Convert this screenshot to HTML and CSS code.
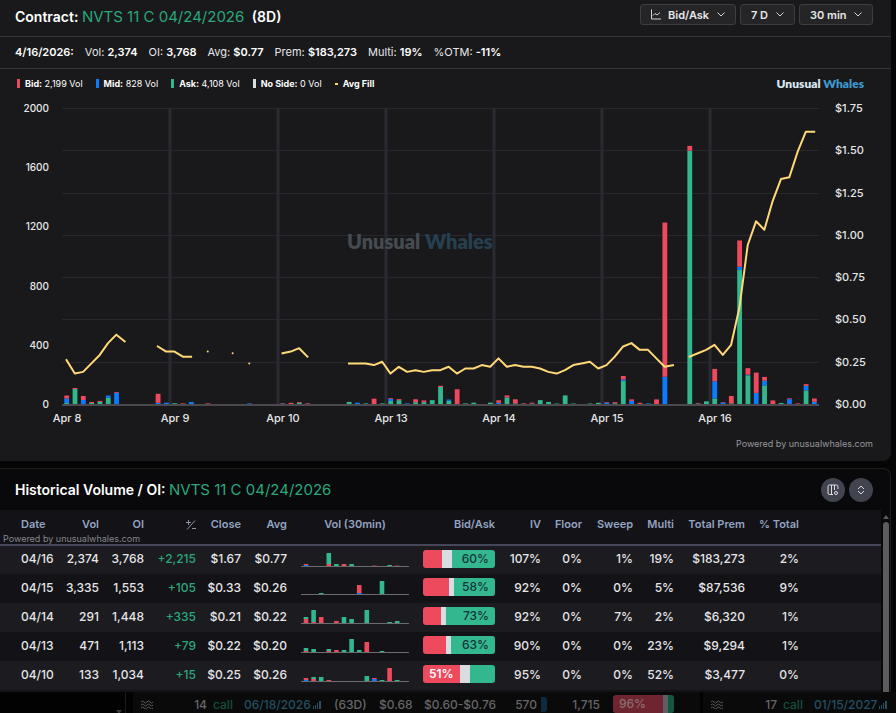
FILE: index.html
```html
<!DOCTYPE html>
<html lang="en">
<head>
  <meta charset="UTF-8">
  <meta name="viewport" content="width=device-width, initial-scale=1.0">
  <title>NVTS 11 C 04/24/2026</title>
  <link rel="stylesheet" href="styles.css">
</head>
<body>
  <section class="panel contract">
    <header class="contract-header">
      <h1>Contract: <span class="symbol">NVTS 11 C 04/24/2026</span> <span class="days">(8D)</span></h1>
      <div class="controls">
        <label class="dropdown">
          <svg class="chart-icon" width="10" height="11" viewBox="0 0 10 11"><path d="M0.500 0.500V10H10M2 6.500L4 4.500L6 6L9 3.500"/></svg>
          <select aria-label="Series"><option>Bid/Ask</option></select>
          <svg class="chevron" width="8" height="5" viewBox="0 0 8 5"><path d="M0.5 0.5L4 4L7.5 0.5"/></svg>
        </label>
        <label class="dropdown">
          <select aria-label="Range"><option>7 D</option></select>
          <svg class="chevron" width="8" height="5" viewBox="0 0 8 5"><path d="M0.5 0.5L4 4L7.5 0.5"/></svg>
        </label>
        <label class="dropdown">
          <select aria-label="Interval"><option>30 min</option></select>
          <svg class="chevron" width="8" height="5" viewBox="0 0 8 5"><path d="M0.5 0.5L4 4L7.5 0.5"/></svg>
        </label>
      </div>
    </header>

    <div class="summary">
      <b>4/16/2026:</b>
      <span>Vol: <b>2,374</b></span>
      <span>OI: <b>3,768</b></span>
      <span>Avg: <b>$0.77</b></span>
      <span>Prem: <b>$183,273</b></span>
      <span>Multi: <b>19%</b></span>
      <span>%OTM: <b>-11%</b></span>
    </div>

    <div class="legend-row">
      <ul class="legend">
        <li class="bid-key"><b>Bid:</b> 2,199 Vol</li>
        <li class="mid-key"><b>Mid:</b> 828 Vol</li>
        <li class="ask-key"><b>Ask:</b> 4,108 Vol</li>
        <li class="none-key"><b>No Side:</b> 0 Vol</li>
        <li class="avg-key"><b>Avg Fill</b></li>
      </ul>
      <div class="logo">Unusual <span>Whales</span></div>
    </div>

    <svg id="chart" class="chart" viewBox="0 0 891 334"></svg>
    <p class="powered">Powered by unusualwhales.com</p>
  </section>

  <section class="panel history">
    <header class="history-header">
      <h2>Historical Volume / OI: <span class="symbol">NVTS 11 C 04/24/2026</span></h2>
      <div class="round-buttons">
        <button type="button" aria-label="Columns">
          <svg width="12" height="12" viewBox="0 0 12 12"><path d="M6 10.500H2.500a1.500 1.500 0 0 1-1.500-1.500V2.500a1.500 1.500 0 0 1 1.500-1.500H9.500a1.500 1.500 0 0 1 1.500 1.500V5M4.500 1V10.500M7.500 1V6"/><circle cx="9" cy="9" r="1.500"/></svg>
        </button>
        <button type="button" aria-label="Expand">
          <svg width="10" height="10" viewBox="0 0 10 10"><path d="M2 4L5 1L8 4M2 6L5 9L8 6"/></svg>
        </button>
      </div>
    </header>

    <div class="history-body">
      <div class="table-wrap">
        <table>
          <colgroup>
            <col class="c-date"><col class="c-vol"><col class="c-oi"><col class="c-diff"><col class="c-close"><col class="c-avg">
            <col class="c-spark"><col class="c-side"><col class="c-iv"><col class="c-floor"><col class="c-sweep"><col class="c-multi">
            <col class="c-prem"><col class="c-total"><col>
          </colgroup>
          <thead>
            <tr>
              <th>Date</th><th>Vol</th><th>OI</th>
              <th><svg class="plus-minus" width="10" height="10" viewBox="0 0 10 10"><path d="M0 2.500H5M2.500 0V5M1 9.500L9 0.500M6 8.500H10"/></svg></th>
              <th>Close</th><th>Avg</th><th class="vol30">Vol (30min)</th><th>Bid/Ask</th><th>IV</th><th>Floor</th>
              <th>Sweep</th><th>Multi</th><th>Total Prem</th><th>% Total</th><th></th>
            </tr>
          </thead>
          <tbody>
            <tr>
              <td>04/16</td><td>2,374</td><td>3,768</td><td class="up">+2,215</td><td>$1.67</td><td>$0.77</td>
              <td><svg class="spark" data-day="04/16" viewBox="0 0 108 18"></svg></td>
              <td><div class="side-bar" data-split="26,14,60">60%</div></td>
              <td>107%</td><td>0%</td><td>1%</td><td>19%</td><td>$183,273</td><td>2%</td><td></td>
            </tr>
            <tr>
              <td>04/15</td><td>3,335</td><td>1,553</td><td class="up">+105</td><td>$0.33</td><td>$0.26</td>
              <td><svg class="spark" data-day="04/15" viewBox="0 0 108 18"></svg></td>
              <td><div class="side-bar" data-split="36,7,57">58%</div></td>
              <td>92%</td><td>0%</td><td>0%</td><td>5%</td><td>$87,536</td><td>9%</td><td></td>
            </tr>
            <tr>
              <td>04/14</td><td>291</td><td>1,448</td><td class="up">+335</td><td>$0.21</td><td>$0.22</td>
              <td><svg class="spark" data-day="04/14" viewBox="0 0 108 18"></svg></td>
              <td><div class="side-bar" data-split="25,7,68">73%</div></td>
              <td>92%</td><td>0%</td><td>7%</td><td>2%</td><td>$6,320</td><td>1%</td><td></td>
            </tr>
            <tr>
              <td>04/13</td><td>471</td><td>1,113</td><td class="up">+79</td><td>$0.22</td><td>$0.20</td>
              <td><svg class="spark" data-day="04/13" viewBox="0 0 108 18"></svg></td>
              <td><div class="side-bar" data-split="32,7,61">63%</div></td>
              <td>90%</td><td>0%</td><td>0%</td><td>23%</td><td>$9,294</td><td>1%</td><td></td>
            </tr>
            <tr>
              <td>04/10</td><td>133</td><td>1,034</td><td class="up">+15</td><td>$0.25</td><td>$0.26</td>
              <td><svg class="spark" data-day="04/10" viewBox="0 0 108 18"></svg></td>
              <td><div class="side-bar bid-led" data-split="51,14,35">51%</div></td>
              <td>95%</td><td>0%</td><td>0%</td><td>52%</td><td>$3,477</td><td>0%</td><td></td>
            </tr>
          </tbody>
        </table>
        <span class="table-credit">Powered by unusualwhales.com</span>
      </div>
      <div class="scrollbar"><i class="arrow"></i><i class="thumb"></i></div>
    </div>
  </section>

  <section class="flow">
    <div class="flow-side"><i class="arrow-down"></i></div>
    <div class="flow-row">
      <svg class="waves" width="12" height="9" viewBox="0 0 12 9"><path d="M0 2q1.500-2 3 0t3 0t3 0t3 0M0 5q1.500-2 3 0t3 0t3 0t3 0M0 8q1.500-2 3 0t3 0t3 0t3 0"/></svg>
      <span class="strike">14</span>
      <span class="call">call</span>
      <span class="expiry">06/18/2026<svg width="8" height="8" viewBox="0 0 8 8"><path d="M0 5h1v3H0zM2 4h1v4H2zM4 2h1v6H4zM6 0h2v8H6z"/></svg></span>
      <span class="dte">(63D)</span>
      <span class="spot">$0.68</span>
      <span class="range">$0.60-$0.76</span>
      <span class="size">570</span>
      <span class="oi">1,715</span>
      <span class="flow-bar">96%</span>
    </div>
    <div class="flow-row">
      <svg class="waves" width="12" height="9" viewBox="0 0 12 9"><path d="M0 2q1.500-2 3 0t3 0t3 0t3 0M0 5q1.500-2 3 0t3 0t3 0t3 0M0 8q1.500-2 3 0t3 0t3 0t3 0"/></svg>
      <span class="strike">17</span>
      <span class="call">call</span>
      <span class="expiry">01/15/2027<svg width="8" height="8" viewBox="0 0 8 8"><path d="M0 5h1v3H0zM2 4h1v4H2zM4 2h1v6H4zM6 0h2v8H6z"/></svg></span>
    </div>
  </section>

  <script src="chart.js"></script>
</body>
</html>
```
FILE: chart.js
```js
const SVG_NS = 'http://www.w3.org/2000/svg';

function add(parent, name, attrs, text) {
  const el = document.createElementNS(SVG_NS, name);
  for (const key in attrs) el.setAttribute(key, attrs[key]);
  if (text) el.textContent = text;
  parent.appendChild(el);
  return el;
}

// [slot, ask, mid, bid], 13 half-hour slots per day
const volume = [
  [0, 7, 30, 20], [1, 101, 0, 7], [2, 0, 27, 27], [3, 7, 0, 7], [4, 14, 0, 7], [5, 42, 15, 0], [6, 0, 76, 5],
  [11, 0, 8, 61], [12, 0, 9, 0], [13, 5, 0, 0], [14, 0, 0, 4], [15, 0, 14, 0], [17, 0, 0, 4], [22, 0, 4, 0],
  [26, 0, 3, 3], [27, 0, 0, 8], [28, 8, 0, 5], [29, 0, 0, 4],
  [34, 14, 0, 0], [35, 0, 9, 0], [36, 4, 0, 0], [37, 0, 0, 36], [38, 4, 0, 0], [39, 20, 14, 5], [40, 26, 0, 7],
  [41, 0, 4, 0], [42, 12, 0, 20], [43, 12, 0, 12], [44, 26, 0, 0], [45, 115, 0, 8], [46, 22, 8, 0], [47, 0, 0, 100],
  [48, 4, 0, 0], [49, 9, 0, 0], [51, 9, 0, 0],
  [52, 0, 8, 17], [53, 44, 0, 14], [54, 4, 0, 28], [55, 0, 0, 4], [56, 3, 0, 6], [57, 26, 0, 0], [58, 14, 0, 0],
  [59, 3, 0, 0], [60, 58, 0, 0], [61, 3, 0, 0], [63, 3, 0, 0], [64, 8, 0, 0],
  [65, 0, 9, 4], [66, 5, 0, 7], [67, 155, 10, 24], [68, 0, 21, 10], [69, 0, 0, 8], [70, 0, 4, 0], [71, 0, 0, 31],
  [72, 0, 184, 1042], [75, 1712, 0, 32], [76, 0, 3, 4], [77, 18, 0, 0],
  [78, 38, 115, 84], [79, 0, 10, 3], [80, 4, 0, 50], [81, 905, 22, 178], [82, 194, 4, 44], [83, 0, 75, 137],
  [84, 126, 31, 26], [85, 0, 0, 24], [86, 7, 0, 0], [87, 0, 33, 5], [88, 0, 0, 4], [89, 92, 30, 12], [90, 0, 15, 22]
];

// average fill, grouped into unbroken runs that start at a slot
const fills = [
  [0, [.26, .18, .19, .24, .29, .36, .41, .37]],
  [11, [.34, .31, .31, .28, .28]],
  [17, [.31]],
  [20, [.30]],
  [22, [.24]],
  [26, [.30, .31, .33, .28]],
  [34, [.24, .24, .24, .23, .25, .18, .22, .19, .20, .19, .20, .20, .22, .18, .21, .21, .23, .22, .27, .22,
        .23, .22, .22, .21, .19, .18, .20, .23, .24, .25, .21, .23, .28, .34, .36, .32, .32, .27, .22, .23]],
  [75, [.28, .30, .32, .35, .29, .35, .57, .94, 1.08, 1.03, 1.20, 1.33, 1.34, 1.49, 1.61, 1.61]]
];

const days = ['Apr 8', 'Apr 9', 'Apr 10', 'Apr 13', 'Apr 14', 'Apr 15', 'Apr 16'];

const left = 62, right = 819, ceiling = 12, base = 308;
const dayWidth = 108;
const slotX = slot => 66.5 + slot * dayWidth / 13;
const volY = v => base - v * (base - ceiling) / 2000;
const priceY = p => base - p * (base - ceiling) / 1.75;

function drawChart() {
  const svg = document.getElementById('chart');

  for (let p = 0.25; p <= 1.75; p += 0.25) {
    const y = Math.round(priceY(p)) + .5;
    add(svg, 'line', { class: 'grid', x1: left, x2: right, y1: y, y2: y });
  }
  for (let d = 1; d < days.length; d++) {
    add(svg, 'rect', { class: 'day-line', x: left + d * dayWidth - 1.5, y: ceiling, width: 3, height: base - ceiling });
  }

  const mark = add(svg, 'text', { class: 'watermark', x: 347, y: 153 }, 'Unusual ');
  add(mark, 'tspan', { class: 'blue' }, 'Whales');

  volume.forEach(([slot, ask, mid, bid]) => {
    let total = 0;
    [['ask', ask], ['mid', mid], ['bid', bid]].forEach(([name, v]) => {
      if (!v) return;
      add(svg, 'rect', { class: name, x: slotX(slot) - 2.2, y: volY(total + v), width: 4.8, height: volY(total) - volY(total + v) });
      total += v;
    });
  });

  add(svg, 'rect', { class: 'axis', x: left, y: base, width: right - left, height: 2 });

  fills.forEach(([start, prices]) => {
    if (prices.length === 1) {
      add(svg, 'circle', { class: 'dot', cx: slotX(start), cy: priceY(prices[0]), r: 1 });
      return;
    }
    const points = prices.map((p, i) => slotX(start + i) + ',' + priceY(p)).join(' ');
    add(svg, 'polyline', { class: 'fill-line', points });
  });

  for (let v = 0; v <= 2000; v += 400) {
    add(svg, 'text', { class: 'label volume', x: 49, y: Math.round(volY(v)) + 4 }, String(v));
  }
  for (let p = 0; p <= 1.75; p += 0.25) {
    add(svg, 'text', { class: 'label', x: 835, y: Math.round(priceY(p)) + 4 }, '$' + p.toFixed(2));
  }
  days.forEach((day, d) => {
    add(svg, 'text', { class: 'label day', x: 67 + d * dayWidth, y: 326 }, day);
  });
}

// per day: [slot, side, height, side, height]
const sparks = {
  '04/16': [[0, 'mid', 1, 'bid', 1], [3, 'bid', 2, 'ask', 11], [4, 'ask', 2], [5, 'bid', 2], [6, 'ask', 2], [9, 'bid', .4], [11, 'ask', 1], [12, 'bid', .4]],
  '04/15': [[2, 'ask', 1], [7, 'mid', 1, 'bid', 8], [10, 'ask', 13]],
  '04/14': [[0, 'bid', 4, 'ask', 2], [1, 'bid', 1, 'ask', 12], [2, 'bid', 6], [4, 'bid', 2], [5, 'ask', 6], [6, 'ask', 4], [8, 'ask', 13], [11, 'ask', 1], [12, 'ask', 2]],
  '04/13': [[0, 'bid', 1, 'ask', 3], [1, 'ask', 3], [3, 'bid', 1, 'ask', 2], [4, 'bid', 2], [5, 'ask', 2], [6, 'ask', 13], [7, 'ask', 2], [8, 'bid', 10], [10, 'ask', 1]],
  '04/10': [[0, 'mid', 1, 'bid', 2], [1, 'bid', 2, 'ask', 2], [2, 'ask', 4], [3, 'bid', 1], [8, 'ask', 5], [9, 'mid', 2, 'bid', 1], [10, 'ask', 1], [11, 'bid', 13], [12, 'ask', 1]]
};

function drawSparks() {
  document.querySelectorAll('.spark').forEach(svg => {
    sparks[svg.dataset.day].forEach(([slot, ...parts]) => {
      let y = 16;
      for (let i = 0; i < parts.length; i += 2) {
        y -= parts[i + 1];
        add(svg, 'rect', { class: parts[i], x: 2.7 + slot * 7.6, y, width: 4.6, height: parts[i + 1] });
      }
    });
    add(svg, 'rect', { class: 'spark-axis', x: 0, y: 16, width: 108, height: 1 });
  });
}

function paintSideBars() {
  document.querySelectorAll('.side-bar').forEach(bar => {
    const [bid, mid] = bar.dataset.split.split(',').map(Number);
    bar.style.setProperty('--bid-end', bid + '%');
    bar.style.setProperty('--mid-end', bid + mid + '%');
  });
}

drawChart();
drawSparks();
paintSideBars();
```
FILE: styles.css
```css
:root {
  --bg: #050506;
  --panel: #19191b;
  --line: #333336;
  --text: #e6e6e8;
  --green: #2aa87c;
  --ask: #33b78f;
  --mid: #0a7cff;
  --bid: #ee4a5d;
  --none: #d8dde4;
  --fill: #ffd977;
}

* {
  box-sizing: border-box;
}

body {
  margin: 0;
  height: 100vh;
  overflow: hidden;
  background: var(--bg);
  color: var(--text);
  font-family: Inter, "Liberation Sans", sans-serif;
  font-size: 11px;
}

.panel {
  margin-right: 5px;
}

h1,
h2 {
  margin: 0;
  font-size: 14px;
  font-weight: 600;
  color: #fff;
}

.symbol {
  color: var(--green);
  font-size: 15px;
  font-weight: 400;
}

.days {
  margin-left: 4px;
}

/* contract panel */

.contract {
  height: 461px;
  background: var(--panel);
  border-bottom-right-radius: 8px;
}

.contract-header {
  display: flex;
  align-items: center;
  justify-content: space-between;
  height: 37px;
  padding: 0 18px 4px 15px;
  border-bottom: 1px solid var(--line);
}

.controls {
  display: flex;
  align-self: flex-start;
  gap: 4px;
  padding-top: 4px;
}

.dropdown {
  display: flex;
  align-items: center;
  gap: 7px;
  height: 21px;
  padding: 0 10px;
  background: #252527;
  border: 1px solid #3d3d40;
  border-radius: 3px;
}

.dropdown select {
  appearance: none;
  padding: 0;
  border: 0;
  background: none;
  color: var(--text);
  font: 600 11px Inter, "Liberation Sans", sans-serif;
}

.dropdown svg {
  fill: none;
  stroke: #d4d4d6;
}

.summary {
  display: flex;
  align-items: center;
  gap: 11px;
  height: 32px;
  padding: 0 0 1px 15px;
  border-bottom: 1px solid var(--line);
}

.summary b {
  color: #fff;
  font-weight: 600;
}

.legend-row {
  display: flex;
  align-items: center;
  justify-content: space-between;
  height: 27px;
  padding: 2px 27px 0 17px;
}

.legend {
  display: flex;
  gap: 13px;
  margin: 0;
  padding: 0;
  list-style: none;
  font-size: 9px;
  color: #fff;
}

.legend li::before {
  content: "";
  display: inline-block;
  width: 3px;
  height: 9px;
  margin-right: 5px;
  vertical-align: -1px;
}

.legend .bid-key::before { background: var(--bid); }
.legend .mid-key::before { background: var(--mid); }
.legend .ask-key::before { background: var(--ask); }
.legend .none-key::before { background: var(--none); }

.legend .avg-key::before {
  height: 2px;
  background: var(--fill);
  vertical-align: 2px;
}

.logo {
  font: 800 12px Lato, sans-serif;
  color: #dbe8f2;
}

.logo span {
  color: #3d9ad0;
}

.chart {
  display: block;
  width: 100%;
}

.chart .grid {
  stroke: #27272d;
}

.day-line {
  fill: #2a2a32;
}

.axis {
  fill: #4a4a4e;
}

.ask { fill: var(--ask); }
.mid { fill: var(--mid); }
.bid { fill: var(--bid); }

.fill-line {
  fill: none;
  stroke: var(--fill);
  stroke-width: 2;
  stroke-linejoin: round;
  stroke-linecap: square;
}

.dot {
  fill: var(--fill);
}

.label {
  fill: var(--text);
  font-size: 11px;
  font-weight: 500;
}

.label.volume {
  font-size: 10px;
  text-anchor: end;
}

.label.day {
  text-anchor: middle;
}

.watermark {
  fill: #454b52;
  font: 800 20px Lato, sans-serif;
}

.watermark .blue {
  fill: #26404f;
}

.powered {
  margin: 8px 18px 0 0;
  color: #97979b;
  font-size: 9px;
  line-height: 12px;
  text-align: right;
}

/* history panel */

.history {
  margin-top: 7px;
  background: #09090b;
  border-top: 1px solid #1e1e20;
  border-right: 1px solid #1e1e20;
  border-top-right-radius: 8px;
}

.history-header {
  display: flex;
  align-items: center;
  justify-content: space-between;
  height: 41px;
  padding: 0 17px 0 15px;
}

.round-buttons {
  display: flex;
  gap: 4px;
}

.round-buttons button {
  display: flex;
  align-items: center;
  justify-content: center;
  width: 24px;
  height: 24px;
  padding: 0;
  border: 0;
  border-radius: 50%;
  background: #41434f;
}

.round-buttons svg {
  fill: none;
  stroke: #dedee2;
}

.history-body {
  display: flex;
  height: 182px;
  overflow: hidden;
}

.table-wrap {
  position: relative;
  flex: 1;
  background: #131317;
}

table {
  width: 100%;
  table-layout: fixed;
  border-collapse: collapse;
  font-size: 12px;
}

.c-date { width: 60px; }
.c-vol { width: 39px; }
.c-oi { width: 45px; }
.c-diff { width: 52px; }
.c-close { width: 45px; }
.c-avg { width: 46px; }
.c-spark { width: 122px; }
.c-side { width: 86px; }
.c-iv { width: 46px; }
.c-floor { width: 41px; }
.c-sweep { width: 51px; }
.c-multi { width: 41px; }
.c-prem { width: 71px; }
.c-total { width: 54px; }

th,
td {
  padding: 0;
  text-align: right;
  white-space: nowrap;
}

th:first-child,
td:first-child {
  padding-left: 21px;
  text-align: left;
}

th {
  height: 35px;
  padding-bottom: 6px;
  border-bottom: 2px solid #454659;
  color: #93a2c0;
  font-size: 11px;
  font-weight: 600;
}

.vol30 {
  padding-left: 14px;
  text-align: center;
}

.plus-minus {
  fill: none;
  stroke: #8b93a5;
  vertical-align: middle;
}

td {
  height: 29px;
  padding-bottom: 3px;
  font-weight: 500;
}

tbody tr:nth-child(odd) {
  background: #1b1b20;
}

.up {
  color: var(--green);
}

.spark {
  display: inline-block;
  width: 108px;
  height: 18px;
  vertical-align: middle;
}

.spark-axis {
  fill: #6d6d70;
}

.side-bar {
  width: 72px;
  height: 18px;
  margin-left: auto;
  padding: 0 6px;
  border-radius: 3px;
  background: linear-gradient(90deg, var(--bid) var(--bid-end), var(--none) var(--bid-end) var(--mid-end), var(--ask) var(--mid-end));
  color: #16353a;
  line-height: 17px;
}

.side-bar.bid-led {
  color: #fff;
  font-weight: 600;
  text-align: left;
}

.table-credit {
  position: absolute;
  left: 3px;
  top: 23px;
  color: #85858d;
  font-size: 9px;
  line-height: 12px;
}

.scrollbar {
  display: flex;
  flex-direction: column;
  align-items: center;
  gap: 3px;
  width: 9px;
  padding-top: 5px;
}

.scrollbar .arrow {
  border: 3px solid transparent;
  border-top: 0;
  border-bottom: 4px solid #5c5c5e;
}

.scrollbar .thumb {
  flex: 1;
  width: 6px;
  border-radius: 3px 3px 0 0;
  background: #5c5c5e;
}

/* dimmed flow list underneath */

.flow {
  display: flex;
  gap: 3px;
  height: 24px;
  background: #020202;
  color: #666668;
  font-size: 12px;
  font-weight: 500;
}

.flow-side {
  display: flex;
  flex: none;
  align-items: flex-end;
  justify-content: flex-end;
  width: 126px;
  margin-right: 4px;
  padding: 0 3px 2px 0;
  border-right: 1px solid #1c1c1e;
}

.arrow-down {
  border: 3px solid transparent;
  border-bottom: 0;
  border-top: 4px solid #39393b;
}

.flow-row {
  display: flex;
  flex: none;
  align-items: center;
  padding-left: 8px;
  background: #0a0a0b;
}

.flow-row:nth-child(2) {
  width: 567px;
}

.flow-row:last-child {
  flex: 1;
}

.waves {
  flex: none;
  fill: none;
  stroke: #5a5a5c;
}

.strike {
  width: 54px;
  text-align: right;
}

.call {
  width: 37px;
  padding-left: 6px;
  color: #15503b;
}

.expiry {
  width: 90px;
  color: #235063;
  white-space: nowrap;
}

.expiry svg {
  margin-left: 2px;
  fill: #235063;
}

.dte {
  width: 45px;
}

.spot {
  width: 45px;
}

.range {
  width: 70px;
}

.size {
  width: 53px;
  padding-right: 4px;
  border-right: 6px solid #0f2a3d;
  border-radius: 3px;
  text-align: right;
}

.oi {
  width: 53px;
  text-align: right;
}

.flow-bar {
  width: 61px;
  height: 18px;
  margin-left: 13px;
  padding-left: 6px;
  border-radius: 3px;
  background: linear-gradient(90deg, #6e2530 82%, #5c5e60 82% 90%, #175640 90%);
  color: #8b6d70;
  line-height: 17px;
}
```
